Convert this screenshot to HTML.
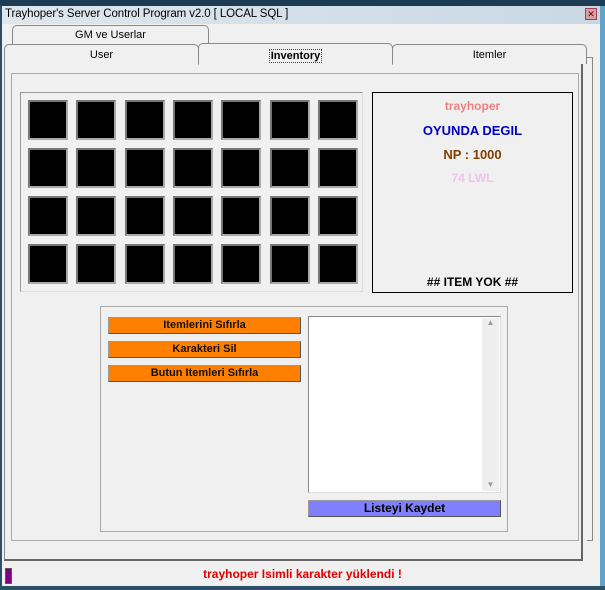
<!DOCTYPE html>
<html><head><meta charset="utf-8"><style>
*{box-sizing:border-box;margin:0;padding:0}
body{width:605px;height:590px;overflow:hidden;background:#f0f0f0;font-family:"Liberation Sans",sans-serif;position:relative}
.a{position:absolute}
.cell{position:absolute;width:40px;height:40px;background:#000;border:2px solid #777;border-right-color:#aaa;border-bottom-color:#aaa}
.btn{position:absolute;left:108px;width:193px;height:17px;background:#ff8000;border:1px solid #999;border-right-color:#555;border-bottom-color:#555;font-size:11px;font-weight:bold;text-align:center;line-height:15px;color:#111}
.tab{position:absolute;background:#f0f0f0;border:1px solid #888;border-bottom:none;border-radius:5px 5px 0 0;font-size:11px;text-align:center}
.inf{position:absolute;left:372px;width:201px;text-align:center;font-weight:bold;font-size:12px}
</style></head><body>
<div class="a" style="left:0;top:0;width:605px;height:6px;background:#1c3c54"></div>
<div class="a" style="left:0;top:6px;width:605px;height:18px;background:linear-gradient(90deg,#dfe7ee,#c9d8e4)"></div>
<div class="a" style="left:0;top:6px;width:2px;height:584px;background:#2a4f66"></div>
<div class="a" style="left:600px;top:6px;width:5px;height:584px;background:#5fa3c8"></div>
<div class="a" style="left:5px;top:8px;font-size:11.5px;color:#000;letter-spacing:-0.1px">Trayhoper's Server Control Program v2.0 [ LOCAL SQL ]</div>
<div class="a" style="left:585px;top:8px;width:12px;height:12px;background:#d8a0a8;border:1px solid #a04050;font-size:9px;line-height:10px;text-align:center;color:#600">✕</div>

<div class="tab" style="left:12px;top:25px;width:197px;height:20px;line-height:18px">GM ve Userlar</div>
<div class="a" style="left:587px;top:57px;width:6px;height:484px;border:1px solid #888;border-left:none;background:#f0f0f0"></div>
<div class="a" style="left:4px;top:63px;width:579px;height:498px;border:1px solid #888;border-right:2px solid #666;border-bottom:2px solid #666;background:#f0f0f0"></div>
<div class="tab" style="left:4px;top:44px;width:195px;height:20px;line-height:20px">User</div>
<div class="tab" style="left:392px;top:44px;width:195px;height:20px;line-height:20px">Itemler</div>
<div class="tab" style="left:198px;top:43px;width:195px;height:22px;line-height:24px;border-bottom:1px solid #f0f0f0"><span style="font-weight:bold;border:1px dotted #444;padding:0 1px">Inventory</span></div>

<div class="a" style="left:11px;top:73px;width:568px;height:468px;border:1px solid #aaa"></div>
<div class="a" style="left:20px;top:92px;width:343px;height:200px;border:1px solid #999;border-right-color:#ddd;border-bottom-color:#ddd"></div>
<div id="g"></div>
<div class="a" style="left:372px;top:92px;width:201px;height:201px;border:1px solid #000"></div>
<div class="inf" style="top:99px;color:#f08080;font-size:12px">trayhoper</div>
<div class="inf" style="top:123px;color:#0000c0;font-size:13px">OYUNDA DEGIL</div>
<div class="inf" style="top:147px;color:#804000;font-size:13px">NP : 1000</div>
<div class="inf" style="top:171px;color:#f0c0f0;font-size:12px">74 LWL</div>
<div class="inf" style="top:275px;color:#000;font-size:12px">## ITEM YOK ##</div>

<div class="a" style="left:100px;top:306px;width:408px;height:226px;border:1px solid #aaa"></div>
<div class="btn" style="top:317px">Itemlerini Sıfırla</div>
<div class="btn" style="top:341px">Karakteri Sil</div>
<div class="btn" style="top:365px">Butun Itemleri Sıfırla</div>
<div class="a" style="left:308px;top:316px;width:193px;height:177px;background:#fff;border:1px solid #888;border-right-color:#ddd;border-bottom-color:#ddd"></div>
<div class="a" style="left:482px;top:318px;width:17px;height:173px;background:#eee;font-size:8px;color:#999;text-align:center">▲<div style="position:absolute;bottom:2px;width:17px">▼</div></div>
<div class="a" style="left:308px;top:500px;width:193px;height:17px;background:#8080ff;border:1px solid #999;border-right-color:#555;border-bottom-color:#555;font-size:12px;font-weight:bold;text-align:center;line-height:15px">Listeyi Kaydet</div>

<div class="a" style="left:5px;top:568px;width:7px;height:16px;background:#800080;border:1px solid #555"></div>
<div class="a" style="left:0;top:567px;width:605px;text-align:center;font-size:12px;font-weight:bold;color:#e00000">trayhoper Isimli karakter yüklendi !</div>
<div class="a" style="left:0;top:586px;width:605px;height:4px;background:#2a4f66"></div>
<script>
var g=document.getElementById('g'),h='';
for(var r=0;r<4;r++)for(var c=0;c<7;c++)h+='<div class="cell" style="left:'+(28+c*48.3)+'px;top:'+(100+r*48)+'px"></div>';
g.innerHTML=h;
</script>
</body></html>
